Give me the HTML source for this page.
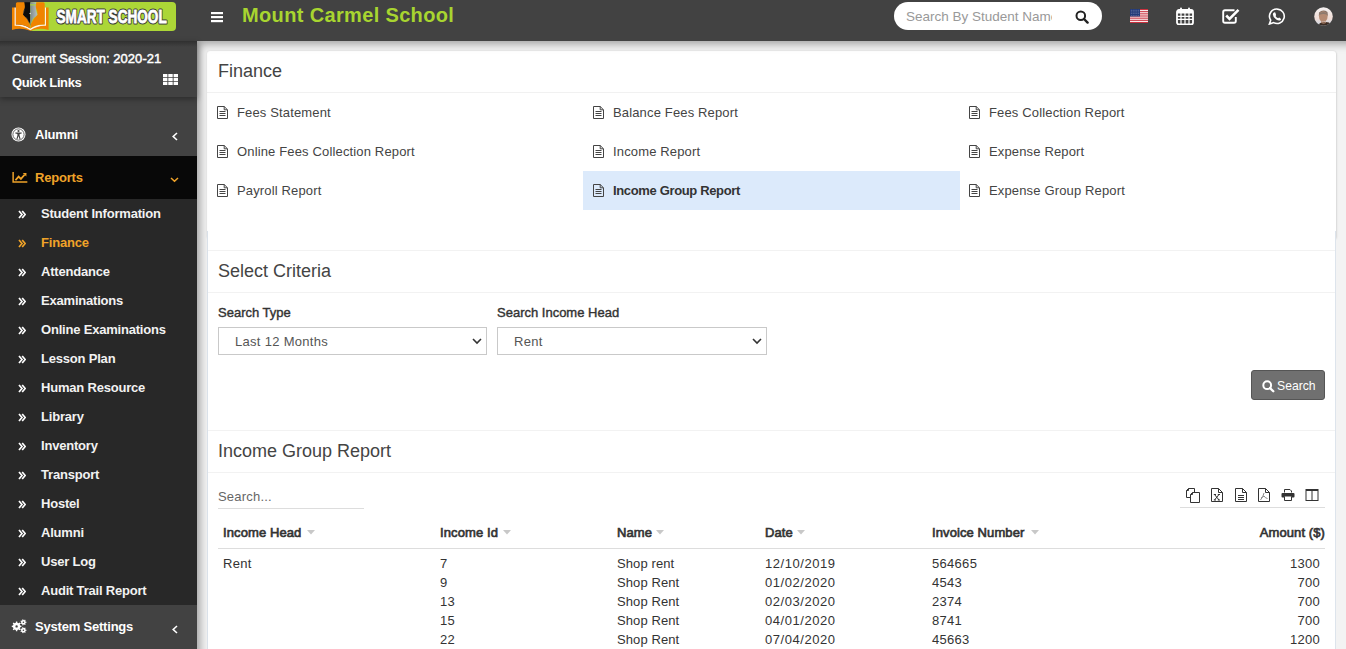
<!DOCTYPE html>
<html><head><meta charset="utf-8">
<style>
*{box-sizing:border-box;margin:0;padding:0}
html,body{width:1346px;height:649px;overflow:hidden;background:#f3f3f3;font-family:"Liberation Sans",sans-serif}
.abs{position:absolute}
#hdr{position:absolute;left:0;top:0;width:1346px;height:41px;background:#424242}
#side{position:absolute;left:0;top:41px;width:197px;height:608px;background:#424242}
#content{position:absolute;left:197px;top:41px;width:1149px;height:608px;background:#f3f3f3;overflow:hidden}
#content:before{content:"";position:absolute;left:0;top:0;right:-20px;bottom:-20px;box-shadow:inset 3px 3px 8px rgba(0,0,0,.35);z-index:5;pointer-events:none}
#side:after{content:"";position:absolute;left:0;top:0;width:197px;height:6px;background:linear-gradient(rgba(0,0,0,.28),rgba(0,0,0,0));z-index:6}
.t{position:absolute;white-space:nowrap}
.box{position:absolute;background:#fff}
.h3{font-size:18px;line-height:20px;color:#444}
.lb{font-size:13px;font-weight:normal;line-height:15px;color:#333;-webkit-text-stroke:0.4px #333}
.th{font-size:13px;font-weight:normal;line-height:15px;color:#333;letter-spacing:0.1px;-webkit-text-stroke:0.65px #333}
.td{font-size:13px;line-height:15px;color:#333;letter-spacing:0.3px}
.sb{font-size:13px;font-weight:bold;line-height:15px;letter-spacing:-0.2px}
</style></head><body>
<div id="hdr">
 <svg class="abs" style="left:0;top:0" width="180" height="34" viewBox="0 0 180 34">
  <defs><linearGradient id="nibg" x1="0" x2="1"><stop offset="0" stop-color="#7f8a8a"/><stop offset="1" stop-color="#b9c2c2"/></linearGradient></defs>
  <rect x="29" y="1.9" width="147" height="29" rx="4" fill="#acd637"/>
  <path d="M12 7.6 H15 V25 Q23 24 30.3 29.5 Q37.6 24 45.6 25 V7.6 H48.6 V30 Q40 27 30.3 30.8 Q20.6 27 12 30Z" fill="#f08400"/>
  <path d="M14.6 7.6 H15.9 V24.6 Q24 24 30.3 28.6 Q36.6 24 44.7 24.6 V7.6 H46 V25.8 Q38 25.2 30.3 30.3 Q22.6 25.2 14.6 25.8Z" fill="#fff3e6"/>
  <path d="M24.2 2.3 H30.3 V26 Q29 20 26.5 17.5 Q23 15.5 23 14.7 Q25 11 24.6 7 Z" fill="#0b0b0b"/>
  <path d="M36.4 2.3 H30.3 V26 Q31.6 20 34.1 17.5 Q37.6 15.5 37.6 14.7 Q35.6 11 36 7 Z" fill="url(#nibg)"/>
  <rect x="30.3" y="4.3" width="6" height="1.1" fill="#acd637"/>
  <circle cx="30.2" cy="13.5" r="0.8" fill="#ddd"/>
  <path d="M17.3 2.3 H24.2 Q25.2 7 24.6 8 Q23 11 23 14.7 Q27.5 18.5 29.6 24 Q30 26.5 30.3 28.6 Q24 24 15.9 24.6 V3.8 Q15.9 2.3 17.3 2.3Z" fill="#f08400"/>
  <path d="M43.3 2.3 H36.4 Q35.4 7 36 8 Q37.6 11 37.6 14.7 Q33.1 18.5 31 24 Q30.6 26.5 30.3 28.6 Q36.6 24 44.7 24.6 V3.8 Q44.7 2.3 43.3 2.3Z" fill="#f08400"/>
  <g transform="translate(56.5 0) scale(0.735 1)">
   <text x="0" y="23.5" font-family="Liberation Sans" font-weight="bold" font-size="18.8" fill="#333" stroke="#3a3a3a" stroke-width="3" stroke-linejoin="round" textLength="150" lengthAdjust="spacingAndGlyphs">SMART SCHOOL</text>
   <text x="0" y="23.5" font-family="Liberation Sans" font-weight="bold" font-size="18.8" fill="#fff" stroke="#fff" stroke-width="0.8" textLength="150" lengthAdjust="spacingAndGlyphs">SMART SCHOOL</text>
  </g>
 </svg>
 <svg class="abs" style="left:211px;top:12px" width="13" height="11" viewBox="0 0 13 11"><rect x="0" y="0" width="12" height="2.2" fill="#fff"/><rect x="0" y="4" width="12" height="2.2" fill="#fff"/><rect x="0" y="8" width="12" height="2.2" fill="#fff"/></svg>
 <div class="t" style="left:242px;top:3px;font-size:20px;font-weight:bold;color:#a8d530;letter-spacing:0.35px;line-height:24px">Mount Carmel School</div>
 <div class="abs" style="left:894px;top:2px;width:208px;height:28px;border-radius:14px;background:#fff;overflow:hidden">
  <div class="t" style="left:12px;top:6.5px;width:146px;overflow:hidden;font-size:13.5px;line-height:16px;color:#999">Search By Student Name</div>
  <svg class="abs" style="left:181px;top:8px" width="14" height="14" viewBox="0 0 14 14"><circle cx="5.8" cy="5.8" r="4.3" fill="none" stroke="#222" stroke-width="2"/><path d="M9 9 L12.6 12.6" stroke="#222" stroke-width="2.4" stroke-linecap="round"/></svg>
 </div>
 <svg class="abs" style="left:1130px;top:9px" width="18" height="14" viewBox="0 0 18 14">
  <rect width="18" height="14" fill="#fff"/>
  <rect y="0" width="18" height="1.1" fill="#c8313e"/><rect y="2.15" width="18" height="1.1" fill="#c8313e"/><rect y="4.3" width="18" height="1.1" fill="#c8313e"/><rect y="6.45" width="18" height="1.1" fill="#c8313e"/><rect y="8.6" width="18" height="1.1" fill="#c8313e"/><rect y="10.75" width="18" height="1.1" fill="#c8313e"/><rect y="12.9" width="18" height="1.1" fill="#c8313e"/>
  <rect width="10" height="7.5" fill="#233a78"/><circle cx="1.2" cy="1.2" r="0.35" fill="#c9d0e6"/><circle cx="1.2" cy="2.9" r="0.35" fill="#c9d0e6"/><circle cx="1.2" cy="4.6" r="0.35" fill="#c9d0e6"/><circle cx="1.2" cy="6.3" r="0.35" fill="#c9d0e6"/><circle cx="3.1" cy="1.2" r="0.35" fill="#c9d0e6"/><circle cx="3.1" cy="2.9" r="0.35" fill="#c9d0e6"/><circle cx="3.1" cy="4.6" r="0.35" fill="#c9d0e6"/><circle cx="3.1" cy="6.3" r="0.35" fill="#c9d0e6"/><circle cx="5.0" cy="1.2" r="0.35" fill="#c9d0e6"/><circle cx="5.0" cy="2.9" r="0.35" fill="#c9d0e6"/><circle cx="5.0" cy="4.6" r="0.35" fill="#c9d0e6"/><circle cx="5.0" cy="6.3" r="0.35" fill="#c9d0e6"/><circle cx="6.9" cy="1.2" r="0.35" fill="#c9d0e6"/><circle cx="6.9" cy="2.9" r="0.35" fill="#c9d0e6"/><circle cx="6.9" cy="4.6" r="0.35" fill="#c9d0e6"/><circle cx="6.9" cy="6.3" r="0.35" fill="#c9d0e6"/><circle cx="8.8" cy="1.2" r="0.35" fill="#c9d0e6"/><circle cx="8.8" cy="2.9" r="0.35" fill="#c9d0e6"/><circle cx="8.8" cy="4.6" r="0.35" fill="#c9d0e6"/><circle cx="8.8" cy="6.3" r="0.35" fill="#c9d0e6"/>
 </svg>
 <svg class="abs" style="left:1176px;top:7px" width="18" height="18" viewBox="0 0 18 18">
  <rect x="1" y="3" width="16" height="14.5" rx="2" fill="none" stroke="#fff" stroke-width="1.8"/>
  <rect x="1" y="3" width="16" height="3.5" fill="#fff"/>
  <rect x="4" y="0.5" width="2" height="4" rx="1" fill="#fff"/><rect x="12" y="0.5" width="2" height="4" rx="1" fill="#fff"/>
  <path d="M1 9.3H17M1 12.3H17M5 6V17M9 6V17M13 6V17" stroke="#fff" stroke-width="1.2"/>
 </svg>
 <svg class="abs" style="left:1222px;top:8px" width="18" height="16" viewBox="0 0 18 16">
  <path d="M12.5 2.2 H3 Q1.2 2.2 1.2 4 V13 Q1.2 14.8 3 14.8 H12 Q13.8 14.8 13.8 13 V9" fill="none" stroke="#fff" stroke-width="1.9"/>
  <path d="M4.2 7.5 L7.5 10.8 L16.5 1.8" fill="none" stroke="#fff" stroke-width="2.6"/>
 </svg>
 <svg class="abs" style="left:1268px;top:8px" width="18" height="17" viewBox="0 0 18 17">
  <path d="M9.5 1.1 A7.2 7.2 0 1 1 5.6 14.6 L1.4 16 L2.7 12.2 A7.2 7.2 0 0 1 9.5 1.1Z" fill="none" stroke="#fff" stroke-width="1.6"/>
  <path d="M6.4 4.3 Q5 4.6 4.8 6.2 Q5 9.4 8.2 11.6 Q10.5 13 12 12.4 Q13 12 13.1 10.9 L11.2 9.6 Q10.7 9.5 10.3 10.3 Q8.6 9.8 7.5 8 Q8.2 7.5 8.1 6.9 L7.3 4.6 Q7 4.3 6.4 4.3Z" fill="#fff"/>
 </svg>
 <svg class="abs" style="left:1313.5px;top:6.5px" width="19" height="19" viewBox="0 0 19 19">
  <defs><clipPath id="av"><circle cx="9.5" cy="9.5" r="9.3"/></clipPath><linearGradient id="avg" x1="0" y1="0" x2="0" y2="1"><stop offset="0" stop-color="#f4f2f2"/><stop offset="0.6" stop-color="#f1ddd6"/><stop offset="1" stop-color="#c9d6e6"/></linearGradient></defs>
  <g clip-path="url(#av)">
   <rect width="19" height="19" fill="url(#avg)"/>
   <path d="M5 5.5 Q9 1.8 13.5 5 L13.8 9 Q9.5 6 4.8 9Z" fill="#857368"/>
   <ellipse cx="9.3" cy="9.5" rx="4.3" ry="5.3" fill="#b58b73"/>
   <path d="M5.3 6.5 Q9.3 3.5 13.3 6.5 L13.4 8 Q9.3 5.8 5.2 8Z" fill="#8d7a6e"/>
   <path d="M4 19 Q5 15.2 9.5 15.2 Q15 14.5 17 17 L18 19Z" fill="#3b2c24"/>
   <path d="M7.2 14 Q9.5 16.8 12 14.2 L12 16 Q9.5 17.5 7.2 16Z" fill="#a47a62"/>
  </g>
 </svg>
</div>
<div id="side">
 <div class="abs" style="left:0;top:0;width:197px;height:56px;background:#424242;box-shadow:0 2px 6px rgba(0,0,0,.35);z-index:2">
  <div class="t sb" style="left:12px;top:10px;color:#fff;font-weight:normal;letter-spacing:0.05px;-webkit-text-stroke:0.45px #fff">Current Session: 2020-21</div>
  <div class="t sb" style="left:12px;top:34px;color:#fff;letter-spacing:-0.4px">Quick Links</div>
  <svg class="abs" style="left:163px;top:32.5px" width="15" height="11" viewBox="0 0 15 11"><path d="M0 0h4.4v3.2H0zM5.3 0h4.4v3.2H5.3zM10.6 0H15v3.2h-4.4zM0 3.9h4.4v3.2H0zM5.3 3.9h4.4v3.2H5.3zM10.6 3.9H15v3.2h-4.4zM0 7.8h4.4V11H0zM5.3 7.8h4.4V11H5.3zM10.6 7.8H15V11h-4.4z" fill="#fff"/></svg>
 </div>
 <div class="abs" style="left:0;top:71px;width:197px;height:44px">
  <svg class="abs" style="left:11px;top:15px" width="15" height="15" viewBox="0 0 15 15"><circle cx="7.5" cy="7.5" r="7" fill="#fff"/><circle cx="7.5" cy="7.5" r="5.6" fill="none" stroke="#424242" stroke-width="0.8"/><circle cx="7.5" cy="4" r="1.1" fill="#424242"/><path d="M4.3 5.6 L10.7 5.6 L10.7 6.6 L8.6 6.9 L8.6 8.5 L9.6 12 L8.6 12.2 L7.5 9 L6.4 12.2 L5.4 12 L6.4 8.5 L6.4 6.9 L4.3 6.6Z" fill="#424242"/></svg>
  <div class="t sb" style="left:35px;top:15px;color:#fff">Alumni</div>
  <svg class="abs" style="left:171px;top:20px" width="8" height="9" viewBox="0 0 8 9"><path d="M6 1 L2.2 4.5 L6 8" fill="none" stroke="#fff" stroke-width="1.6"/></svg>
 </div>
 <div class="abs" style="left:0;top:115px;width:197px;height:43px;background:#080808">
  <svg class="abs" style="left:12px;top:16px" width="16" height="11" viewBox="0 0 17 12"><path d="M1 0 V11 H16.5" fill="none" stroke="#f0a329" stroke-width="1.6"/><path d="M3.5 9 L7 5 L9.5 7.5 L13.5 3" fill="none" stroke="#f0a329" stroke-width="2"/><path d="M11.5 1.2 L15.6 1 L15.4 5Z" fill="#f0a329"/></svg>
  <div class="t sb" style="left:35px;top:14px;color:#f0a329">Reports</div>
  <svg class="abs" style="left:170px;top:21px" width="9" height="6" viewBox="0 0 9 6"><path d="M1 1 L4.5 4.3 L8 1" fill="none" stroke="#f0a329" stroke-width="1.5"/></svg>
 </div>
 <div class="abs" style="left:0;top:158px;width:197px;height:406px;background:#282828">
<div class="abs" style="left:0;top:0px;width:197px;height:29px"><svg class="abs" style="left:17.5px;top:11px" width="8" height="9" viewBox="0 0 8 9"><path d="M1 1 L4 4.5 L1 8 M4.2 1 L7.2 4.5 L4.2 8" fill="none" stroke="#fff" stroke-width="1.7"/></svg><div class="t sb" style="left:41px;top:7px;color:#f2f2f2">Student Information</div></div>
<div class="abs" style="left:0;top:29px;width:197px;height:29px"><svg class="abs" style="left:17.5px;top:11px" width="8" height="9" viewBox="0 0 8 9"><path d="M1 1 L4 4.5 L1 8 M4.2 1 L7.2 4.5 L4.2 8" fill="none" stroke="#f0a329" stroke-width="1.7"/></svg><div class="t sb" style="left:41px;top:7px;color:#f0a329">Finance</div></div>
<div class="abs" style="left:0;top:58px;width:197px;height:29px"><svg class="abs" style="left:17.5px;top:11px" width="8" height="9" viewBox="0 0 8 9"><path d="M1 1 L4 4.5 L1 8 M4.2 1 L7.2 4.5 L4.2 8" fill="none" stroke="#fff" stroke-width="1.7"/></svg><div class="t sb" style="left:41px;top:7px;color:#f2f2f2">Attendance</div></div>
<div class="abs" style="left:0;top:87px;width:197px;height:29px"><svg class="abs" style="left:17.5px;top:11px" width="8" height="9" viewBox="0 0 8 9"><path d="M1 1 L4 4.5 L1 8 M4.2 1 L7.2 4.5 L4.2 8" fill="none" stroke="#fff" stroke-width="1.7"/></svg><div class="t sb" style="left:41px;top:7px;color:#f2f2f2">Examinations</div></div>
<div class="abs" style="left:0;top:116px;width:197px;height:29px"><svg class="abs" style="left:17.5px;top:11px" width="8" height="9" viewBox="0 0 8 9"><path d="M1 1 L4 4.5 L1 8 M4.2 1 L7.2 4.5 L4.2 8" fill="none" stroke="#fff" stroke-width="1.7"/></svg><div class="t sb" style="left:41px;top:7px;color:#f2f2f2">Online Examinations</div></div>
<div class="abs" style="left:0;top:145px;width:197px;height:29px"><svg class="abs" style="left:17.5px;top:11px" width="8" height="9" viewBox="0 0 8 9"><path d="M1 1 L4 4.5 L1 8 M4.2 1 L7.2 4.5 L4.2 8" fill="none" stroke="#fff" stroke-width="1.7"/></svg><div class="t sb" style="left:41px;top:7px;color:#f2f2f2">Lesson Plan</div></div>
<div class="abs" style="left:0;top:174px;width:197px;height:29px"><svg class="abs" style="left:17.5px;top:11px" width="8" height="9" viewBox="0 0 8 9"><path d="M1 1 L4 4.5 L1 8 M4.2 1 L7.2 4.5 L4.2 8" fill="none" stroke="#fff" stroke-width="1.7"/></svg><div class="t sb" style="left:41px;top:7px;color:#f2f2f2">Human Resource</div></div>
<div class="abs" style="left:0;top:203px;width:197px;height:29px"><svg class="abs" style="left:17.5px;top:11px" width="8" height="9" viewBox="0 0 8 9"><path d="M1 1 L4 4.5 L1 8 M4.2 1 L7.2 4.5 L4.2 8" fill="none" stroke="#fff" stroke-width="1.7"/></svg><div class="t sb" style="left:41px;top:7px;color:#f2f2f2">Library</div></div>
<div class="abs" style="left:0;top:232px;width:197px;height:29px"><svg class="abs" style="left:17.5px;top:11px" width="8" height="9" viewBox="0 0 8 9"><path d="M1 1 L4 4.5 L1 8 M4.2 1 L7.2 4.5 L4.2 8" fill="none" stroke="#fff" stroke-width="1.7"/></svg><div class="t sb" style="left:41px;top:7px;color:#f2f2f2">Inventory</div></div>
<div class="abs" style="left:0;top:261px;width:197px;height:29px"><svg class="abs" style="left:17.5px;top:11px" width="8" height="9" viewBox="0 0 8 9"><path d="M1 1 L4 4.5 L1 8 M4.2 1 L7.2 4.5 L4.2 8" fill="none" stroke="#fff" stroke-width="1.7"/></svg><div class="t sb" style="left:41px;top:7px;color:#f2f2f2">Transport</div></div>
<div class="abs" style="left:0;top:290px;width:197px;height:29px"><svg class="abs" style="left:17.5px;top:11px" width="8" height="9" viewBox="0 0 8 9"><path d="M1 1 L4 4.5 L1 8 M4.2 1 L7.2 4.5 L4.2 8" fill="none" stroke="#fff" stroke-width="1.7"/></svg><div class="t sb" style="left:41px;top:7px;color:#f2f2f2">Hostel</div></div>
<div class="abs" style="left:0;top:319px;width:197px;height:29px"><svg class="abs" style="left:17.5px;top:11px" width="8" height="9" viewBox="0 0 8 9"><path d="M1 1 L4 4.5 L1 8 M4.2 1 L7.2 4.5 L4.2 8" fill="none" stroke="#fff" stroke-width="1.7"/></svg><div class="t sb" style="left:41px;top:7px;color:#f2f2f2">Alumni</div></div>
<div class="abs" style="left:0;top:348px;width:197px;height:29px"><svg class="abs" style="left:17.5px;top:11px" width="8" height="9" viewBox="0 0 8 9"><path d="M1 1 L4 4.5 L1 8 M4.2 1 L7.2 4.5 L4.2 8" fill="none" stroke="#fff" stroke-width="1.7"/></svg><div class="t sb" style="left:41px;top:7px;color:#f2f2f2">User Log</div></div>
<div class="abs" style="left:0;top:377px;width:197px;height:29px"><svg class="abs" style="left:17.5px;top:11px" width="8" height="9" viewBox="0 0 8 9"><path d="M1 1 L4 4.5 L1 8 M4.2 1 L7.2 4.5 L4.2 8" fill="none" stroke="#fff" stroke-width="1.7"/></svg><div class="t sb" style="left:41px;top:7px;color:#f2f2f2">Audit Trail Report</div></div>
 </div>
 <div class="abs" style="left:0;top:564px;width:197px;height:44px;background:#424242">
  <svg class="abs" style="left:10px;top:13px" width="18" height="16" viewBox="0 0 18 16"><path fill-rule="evenodd" fill="#fff" d="M10.21 7.61 L11.45 7.73 L11.45 9.07 L10.21 9.19 L9.72 10.39 L10.51 11.36 L9.56 12.31 L8.59 11.52 L7.39 12.01 L7.27 13.25 L5.93 13.25 L5.81 12.01 L4.61 11.52 L3.64 12.31 L2.69 11.36 L3.48 10.39 L2.99 9.19 L1.75 9.07 L1.75 7.73 L2.99 7.61 L3.48 6.41 L2.69 5.44 L3.64 4.49 L4.61 5.28 L5.81 4.79 L5.93 3.55 L7.27 3.55 L7.39 4.79 L8.59 5.28 L9.56 4.49 L10.51 5.44 L9.72 6.41Z M7.80 8.40 A1.2 1.2 0 1 0 5.40 8.40 A1.2 1.2 0 1 0 7.80 8.40Z M15.63 3.74 L16.46 3.82 L16.46 4.78 L15.63 4.86 L15.23 5.69 L15.69 6.39 L14.93 7.00 L14.35 6.39 L13.45 6.60 L13.19 7.39 L12.25 7.18 L12.36 6.35 L11.63 5.77 L10.85 6.07 L10.43 5.19 L11.15 4.76 L11.15 3.84 L10.43 3.41 L10.85 2.53 L11.63 2.83 L12.36 2.25 L12.25 1.42 L13.19 1.21 L13.45 2.00 L14.35 2.21 L14.93 1.60 L15.69 2.21 L15.23 2.91Z M14.20 4.30 A0.8 0.8 0 1 0 12.60 4.30 A0.8 0.8 0 1 0 14.20 4.30Z M15.63 11.64 L16.46 11.72 L16.46 12.68 L15.63 12.76 L15.23 13.59 L15.69 14.29 L14.93 14.90 L14.35 14.29 L13.45 14.50 L13.19 15.29 L12.25 15.08 L12.36 14.25 L11.63 13.67 L10.85 13.97 L10.43 13.09 L11.15 12.66 L11.15 11.74 L10.43 11.31 L10.85 10.43 L11.63 10.73 L12.36 10.15 L12.25 9.32 L13.19 9.11 L13.45 9.90 L14.35 10.11 L14.93 9.50 L15.69 10.11 L15.23 10.81Z M14.20 12.20 A0.8 0.8 0 1 0 12.60 12.20 A0.8 0.8 0 1 0 14.20 12.20Z"/></svg>
  <div class="t sb" style="left:35px;top:14px;color:#fff">System Settings</div>
  <svg class="abs" style="left:171px;top:20px" width="8" height="9" viewBox="0 0 8 9"><path d="M6 1 L2.2 4.5 L6 8" fill="none" stroke="#fff" stroke-width="1.6"/></svg>
 </div>
</div>
<div id="content">
 <div class="abs box" style="left:10px;top:10px;width:1129px;height:188px;box-shadow:0 0 2px rgba(0,0,0,.13),1px 1px 2px rgba(0,0,0,.08);border-radius:3px"></div>
 <div class="t h3" style="left:21px;top:20px">Finance</div>
 <div class="abs" style="left:10px;top:51px;width:1129px;height:1px;background:#f1f1f1"></div>
 <svg class="abs" style="left:20px;top:65px" width="12" height="14" viewBox="0 0 12 14"><path d="M0.5 0.5 H7.2 L10.5 3.8 V12.5 H0.5 Z" fill="none" stroke="#444" stroke-width="1"/><path d="M7.2 0.5 V3.8 H10.5" fill="none" stroke="#444" stroke-width="1"/><path d="M2.5 5.5 H8.5 M2.5 7.5 H8.5 M2.5 9.5 H8.5" stroke="#444" stroke-width="1"/></svg><div class="t" style="left:40px;top:64px;font-size:13px;line-height:15px;color:#444;letter-spacing:0.15px">Fees Statement</div>
<svg class="abs" style="left:20px;top:104px" width="12" height="14" viewBox="0 0 12 14"><path d="M0.5 0.5 H7.2 L10.5 3.8 V12.5 H0.5 Z" fill="none" stroke="#444" stroke-width="1"/><path d="M7.2 0.5 V3.8 H10.5" fill="none" stroke="#444" stroke-width="1"/><path d="M2.5 5.5 H8.5 M2.5 7.5 H8.5 M2.5 9.5 H8.5" stroke="#444" stroke-width="1"/></svg><div class="t" style="left:40px;top:103px;font-size:13px;line-height:15px;color:#444;letter-spacing:0.15px">Online Fees Collection Report</div>
<svg class="abs" style="left:20px;top:143px" width="12" height="14" viewBox="0 0 12 14"><path d="M0.5 0.5 H7.2 L10.5 3.8 V12.5 H0.5 Z" fill="none" stroke="#444" stroke-width="1"/><path d="M7.2 0.5 V3.8 H10.5" fill="none" stroke="#444" stroke-width="1"/><path d="M2.5 5.5 H8.5 M2.5 7.5 H8.5 M2.5 9.5 H8.5" stroke="#444" stroke-width="1"/></svg><div class="t" style="left:40px;top:142px;font-size:13px;line-height:15px;color:#444;letter-spacing:0.15px">Payroll Report</div>
<svg class="abs" style="left:396px;top:65px" width="12" height="14" viewBox="0 0 12 14"><path d="M0.5 0.5 H7.2 L10.5 3.8 V12.5 H0.5 Z" fill="none" stroke="#444" stroke-width="1"/><path d="M7.2 0.5 V3.8 H10.5" fill="none" stroke="#444" stroke-width="1"/><path d="M2.5 5.5 H8.5 M2.5 7.5 H8.5 M2.5 9.5 H8.5" stroke="#444" stroke-width="1"/></svg><div class="t" style="left:416px;top:64px;font-size:13px;line-height:15px;color:#444;letter-spacing:0.15px">Balance Fees Report</div>
<svg class="abs" style="left:396px;top:104px" width="12" height="14" viewBox="0 0 12 14"><path d="M0.5 0.5 H7.2 L10.5 3.8 V12.5 H0.5 Z" fill="none" stroke="#444" stroke-width="1"/><path d="M7.2 0.5 V3.8 H10.5" fill="none" stroke="#444" stroke-width="1"/><path d="M2.5 5.5 H8.5 M2.5 7.5 H8.5 M2.5 9.5 H8.5" stroke="#444" stroke-width="1"/></svg><div class="t" style="left:416px;top:103px;font-size:13px;line-height:15px;color:#444;letter-spacing:0.15px">Income Report</div>
<div class="abs" style="left:386px;top:130px;width:377px;height:39px;background:#dceafb"></div><svg class="abs" style="left:396px;top:143px" width="12" height="14" viewBox="0 0 12 14"><path d="M0.5 0.5 H7.2 L10.5 3.8 V12.5 H0.5 Z" fill="none" stroke="#444" stroke-width="1"/><path d="M7.2 0.5 V3.8 H10.5" fill="none" stroke="#444" stroke-width="1"/><path d="M2.5 5.5 H8.5 M2.5 7.5 H8.5 M2.5 9.5 H8.5" stroke="#444" stroke-width="1"/></svg><div class="t" style="left:416px;top:142px;font-size:13px;line-height:15px;font-weight:bold;letter-spacing:-0.35px;color:#333">Income Group Report</div>
<svg class="abs" style="left:772px;top:65px" width="12" height="14" viewBox="0 0 12 14"><path d="M0.5 0.5 H7.2 L10.5 3.8 V12.5 H0.5 Z" fill="none" stroke="#444" stroke-width="1"/><path d="M7.2 0.5 V3.8 H10.5" fill="none" stroke="#444" stroke-width="1"/><path d="M2.5 5.5 H8.5 M2.5 7.5 H8.5 M2.5 9.5 H8.5" stroke="#444" stroke-width="1"/></svg><div class="t" style="left:792px;top:64px;font-size:13px;line-height:15px;color:#444;letter-spacing:0.15px">Fees Collection Report</div>
<svg class="abs" style="left:772px;top:104px" width="12" height="14" viewBox="0 0 12 14"><path d="M0.5 0.5 H7.2 L10.5 3.8 V12.5 H0.5 Z" fill="none" stroke="#444" stroke-width="1"/><path d="M7.2 0.5 V3.8 H10.5" fill="none" stroke="#444" stroke-width="1"/><path d="M2.5 5.5 H8.5 M2.5 7.5 H8.5 M2.5 9.5 H8.5" stroke="#444" stroke-width="1"/></svg><div class="t" style="left:792px;top:103px;font-size:13px;line-height:15px;color:#444;letter-spacing:0.15px">Expense Report</div>
<svg class="abs" style="left:772px;top:143px" width="12" height="14" viewBox="0 0 12 14"><path d="M0.5 0.5 H7.2 L10.5 3.8 V12.5 H0.5 Z" fill="none" stroke="#444" stroke-width="1"/><path d="M7.2 0.5 V3.8 H10.5" fill="none" stroke="#444" stroke-width="1"/><path d="M2.5 5.5 H8.5 M2.5 7.5 H8.5 M2.5 9.5 H8.5" stroke="#444" stroke-width="1"/></svg><div class="t" style="left:792px;top:142px;font-size:13px;line-height:15px;color:#444;letter-spacing:0.15px">Expense Group Report</div>

 <div class="abs box" style="left:10px;top:190px;width:1129px;height:620px;border-left:1px solid #dde4ec;border-right:1px solid #dde4ec"></div>
 <div class="abs" style="left:11px;top:209px;width:1127px;height:1px;background:#f2f2f2"></div>
 <div class="t h3" style="left:21px;top:220px">Select Criteria</div>
 <div class="abs" style="left:11px;top:251px;width:1127px;height:1px;background:#f2f2f2"></div>
 <div class="t lb" style="left:21px;top:264px">Search Type</div>
 <div class="t lb" style="left:300px;top:264px">Search Income Head</div>
 <div class="abs" style="left:21px;top:286px;width:269px;height:28px;border:1px solid #c9c9c9;background:#fff"><div class="t" style="left:16px;top:6px;font-size:13px;line-height:15px;color:#555;letter-spacing:0.3px">Last 12 Months</div><svg class="abs" style="right:4px;top:10px" width="10" height="7" viewBox="0 0 10 7"><path d="M1 1 L5 5 L9 1" fill="none" stroke="#333" stroke-width="1.6"/></svg></div>
 <div class="abs" style="left:300px;top:286px;width:270px;height:28px;border:1px solid #c9c9c9;background:#fff"><div class="t" style="left:16px;top:6px;font-size:13px;line-height:15px;color:#555;letter-spacing:0.3px">Rent</div><svg class="abs" style="right:4px;top:10px" width="10" height="7" viewBox="0 0 10 7"><path d="M1 1 L5 5 L9 1" fill="none" stroke="#333" stroke-width="1.6"/></svg></div>
 <div class="abs" style="left:1054px;top:329px;width:74px;height:30px;background:#707070;border:1px solid #555;border-radius:3px">
  <svg class="abs" style="left:10px;top:9px" width="13" height="13" viewBox="0 0 13 13"><circle cx="5.2" cy="5.2" r="3.9" fill="none" stroke="#fff" stroke-width="2"/><path d="M8 8 L11.3 11.3" stroke="#fff" stroke-width="2.3" stroke-linecap="round"/></svg>
  <div class="t" style="left:25px;top:8px;color:#fff;font-size:12.2px;line-height:14px">Search</div>
 </div>
 <div class="abs" style="left:11px;top:389px;width:1127px;height:1px;background:#f2f2f2"></div>
 <div class="t h3" style="left:21px;top:400px">Income Group Report</div>
 <div class="abs" style="left:11px;top:431px;width:1127px;height:1px;background:#f2f2f2"></div>
 <div class="t" style="left:21px;top:448px;font-size:13px;line-height:15px;color:#666;letter-spacing:0.2px">Search...</div>
 <div class="abs" style="left:21px;top:467px;width:146px;height:1px;background:#ddd"></div>
 <svg class="abs" style="left:988px;top:446px" width="16" height="16" viewBox="0 0 16 16" fill="none" stroke="#333" stroke-width="1"><path d="M5.5 10.5 H1.5 V3.5 L3.5 1.5 H9.5 V5"/><path d="M3.5 1.5 V3.5 H1.5"/><path d="M5.5 15.5 V7.5 L7.5 5.5 H14.5 V15.5 Z"/><path d="M7.5 5.5 V7.5 H5.5"/></svg>
<svg class="abs" style="left:1013px;top:446px" width="14" height="16" viewBox="0 0 14 16" fill="none" stroke="#333" stroke-width="1"><path d="M1.5 1.5 H8.5 L12.5 5.5 V14.5 H1.5 Z"/><path d="M8.5 1.5 V5.5 H12.5"/><path d="M4.5 7.5 L9 13 M9 7.5 L4.5 13 M3.8 7.5H6 M7.8 7.5H10 M3.8 13H6 M7.8 13H10"/></svg>
<svg class="abs" style="left:1037px;top:446px" width="14" height="16" viewBox="0 0 14 16" fill="none" stroke="#333" stroke-width="1"><path d="M1.5 1.5 H8.5 L12.5 5.5 V14.5 H1.5 Z"/><path d="M8.5 1.5 V5.5 H12.5"/><path d="M4 8.5 H10 M4 10.5 H10 M4 12.5 H10"/></svg>
<svg class="abs" style="left:1060px;top:446px" width="14" height="16" viewBox="0 0 14 16" fill="none" stroke="#333" stroke-width="1"><path d="M1.5 1.5 H8.5 L12.5 5.5 V14.5 H1.5 Z"/><path d="M8.5 1.5 V5.5 H12.5"/><path d="M7 6 Q6.5 9 3.5 13 M7 9 Q8 11 10.5 11.5 M7 9 Q5 10.5 4 11" stroke="#888"/></svg>
<svg class="abs" style="left:1084px;top:447px" width="14" height="14" viewBox="0 0 14 14"><path d="M3.5 4.5 V1.5 H9 L10.5 3 V4.5" fill="none" stroke="#333" stroke-width="1"/><rect x="0.5" y="5" width="13" height="4.5" rx="1" fill="#333"/><path d="M3.5 8.5 V12.5 H10.5 V8.5" fill="#fff" stroke="#333" stroke-width="1"/></svg>
<svg class="abs" style="left:1108px;top:447px" width="14" height="14" viewBox="0 0 14 14" fill="none" stroke="#333"><rect x="1" y="1.5" width="12" height="11" stroke-width="1"/><path d="M1 2 H13" stroke-width="2"/><path d="M7 2 V12.5" stroke-width="1"/></svg>
 <div class="abs" style="left:983px;top:466px;width:145px;height:1px;background:#ddd"></div>
 <div class="t th" style="left:26px;top:484px">Income Head</div><svg class="abs" style="left:110px;top:489px" width="8" height="5" viewBox="0 0 8 5"><path d="M0 0 H8 L4 4.5Z" fill="#c8c8c8"/></svg><div class="t th" style="left:243px;top:484px">Income Id</div><svg class="abs" style="left:306px;top:489px" width="8" height="5" viewBox="0 0 8 5"><path d="M0 0 H8 L4 4.5Z" fill="#c8c8c8"/></svg><div class="t th" style="left:420px;top:484px">Name</div><svg class="abs" style="left:459px;top:489px" width="8" height="5" viewBox="0 0 8 5"><path d="M0 0 H8 L4 4.5Z" fill="#c8c8c8"/></svg><div class="t th" style="left:568px;top:484px">Date</div><svg class="abs" style="left:600px;top:489px" width="8" height="5" viewBox="0 0 8 5"><path d="M0 0 H8 L4 4.5Z" fill="#c8c8c8"/></svg><div class="t th" style="left:735px;top:484px">Invoice Number</div><svg class="abs" style="left:834px;top:489px" width="8" height="5" viewBox="0 0 8 5"><path d="M0 0 H8 L4 4.5Z" fill="#c8c8c8"/></svg><div class="t th" style="right:21px;top:484px">Amount ($)</div>
 <div class="abs" style="left:21px;top:507px;width:1107px;height:1px;background:#ddd"></div>
 <div class="t td" style="left:26px;top:515px">Rent</div><div class="t td" style="left:243px;top:515px">7</div><div class="t td" style="left:420px;top:515px;letter-spacing:0.1px">Shop rent</div><div class="t td" style="left:568px;top:515px;letter-spacing:0.55px">12/10/2019</div><div class="t td" style="left:735px;top:515px">564665</div><div class="t td" style="right:26px;top:515px">1300</div>
<div class="t td" style="left:243px;top:534px">9</div><div class="t td" style="left:420px;top:534px;letter-spacing:0.1px">Shop Rent</div><div class="t td" style="left:568px;top:534px;letter-spacing:0.55px">01/02/2020</div><div class="t td" style="left:735px;top:534px">4543</div><div class="t td" style="right:26px;top:534px">700</div>
<div class="t td" style="left:243px;top:553px">13</div><div class="t td" style="left:420px;top:553px;letter-spacing:0.1px">Shop Rent</div><div class="t td" style="left:568px;top:553px;letter-spacing:0.55px">02/03/2020</div><div class="t td" style="left:735px;top:553px">2374</div><div class="t td" style="right:26px;top:553px">700</div>
<div class="t td" style="left:243px;top:572px">15</div><div class="t td" style="left:420px;top:572px;letter-spacing:0.1px">Shop Rent</div><div class="t td" style="left:568px;top:572px;letter-spacing:0.55px">04/01/2020</div><div class="t td" style="left:735px;top:572px">8741</div><div class="t td" style="right:26px;top:572px">700</div>
<div class="t td" style="left:243px;top:591px">22</div><div class="t td" style="left:420px;top:591px;letter-spacing:0.1px">Shop Rent</div><div class="t td" style="left:568px;top:591px;letter-spacing:0.55px">07/04/2020</div><div class="t td" style="left:735px;top:591px">45663</div><div class="t td" style="right:26px;top:591px">1200</div>

</div>
</body></html>
